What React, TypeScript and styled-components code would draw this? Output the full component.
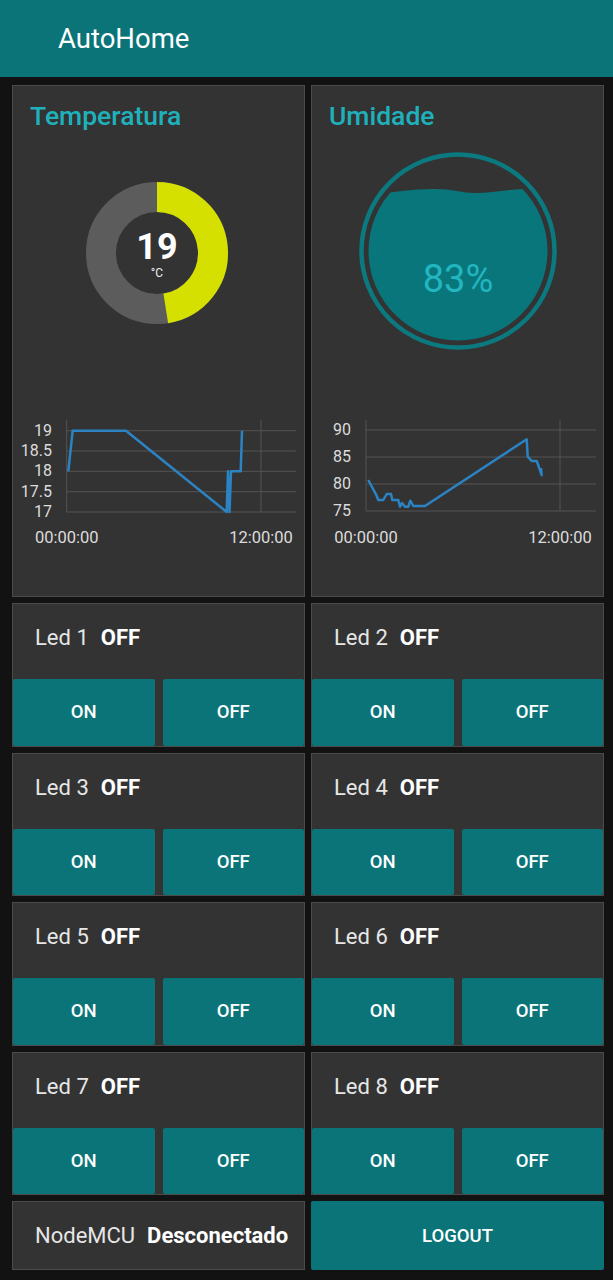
import React from "react";
import styled, { createGlobalStyle } from "styled-components";

const TEAL = "#0a7479";

const GlobalStyle = createGlobalStyle`
  html, body { margin: 0; padding: 0; background: #121212; }
  body { font-family: Roboto, "Noto Sans", Arial, sans-serif; }
  * { box-sizing: border-box; }
`;

const Page = styled.div`
  min-height: 1280px;
  background: #121212;
`;

const Header = styled.header`
  height: 77px;
  background: ${TEAL};
  display: flex;
  align-items: center;
  padding-left: 58px;
  color: #ffffff;
  font-size: 27.5px;
  font-weight: 400;
`;

const Grid = styled.main`
  display: grid;
  grid-template-columns: 293px 293px;
  gap: 6px;
  padding: 8px 9px 0 12px;
`;

const Card = styled.section`
  height: 512px;
  background: #333333;
  border: 1px solid #4b4b4b;
  display: flex;
  flex-direction: column;
  overflow: hidden;
`;

const CardTitle = styled.h2`
  margin: 0;
  padding: 15px 17px 0;
  font-size: 26.5px;
  line-height: 30px;
  font-weight: 500;
  color: #1fb1bb;
`;

const GaugeArea = styled.div<{ $shift?: number }>`
  height: 244px;
  display: flex;
  align-items: center;
  justify-content: center;
  padding-right: ${(p) => p.$shift ?? 0}px;
`;

const ChartSvg = styled.svg`
  display: block;
  margin-top: 35px;
  font-family: Roboto, Arial, sans-serif;
`;

const LedCard = styled.section`
  height: 143.5px;
  background: #333333;
  border: 1px solid #4b4b4b;
  display: flex;
  flex-direction: column;
`;

const LedTitle = styled.div`
  height: 75px;
  padding: 21px 22px 0;
  font-size: 22px;
  line-height: 25px;
  color: #e6e6e6;
  display: flex;
  gap: 12px;
`;

const State = styled.b`
  font-weight: 700;
  color: #ffffff;
`;

const ButtonRow = styled.div`
  flex: 1;
  display: grid;
  grid-template-columns: 1fr 1fr;
  gap: 8px;
`;

const ActionButton = styled.button<{ $tall?: boolean }>`
  background: ${TEAL};
  border: 0;
  border-radius: 2px;
  color: #ffffff;
  font-family: inherit;
  font-size: 18.5px;
  font-weight: 500;
  text-transform: uppercase;
  padding: 0;
  height: ${(p) => (p.$tall ? "69px" : "auto")};
`;

const StatusCard = styled.section`
  height: 69px;
  background: #333333;
  border: 1px solid #4b4b4b;
  display: flex;
  align-items: center;
  gap: 12px;
  padding-left: 22px;
  font-size: 22px;
  color: #e6e6e6;
`;

const LINE = "#2b83c4";
const GRID = "#545454";
const LABEL = "#dcdcdc";

function Donut() {
  const c = 75;
  const r = 56;
  const a = (171 * Math.PI) / 180;
  const ex = c + r * Math.sin(a);
  const ey = c - r * Math.cos(a);
  return (
    <svg width="150" height="150" viewBox="0 0 150 150">
      <circle cx={c} cy={c} r={r} fill="none" stroke="#5c5c5c" strokeWidth="30" />
      <path
        d={`M ${c} ${c - r} A ${r} ${r} 0 0 1 ${ex} ${ey}`}
        fill="none"
        stroke="#d5df00"
        strokeWidth="30"
      />
      <text x={c} y="81" textAnchor="middle" fontSize="36" fontWeight="700" fill="#ffffff" fontFamily="Roboto, Arial, sans-serif">
        19
      </text>
      <text x={c} y="98.5" textAnchor="middle" fontSize="12" fill="#eeeeee" fontFamily="Roboto, Arial, sans-serif">
        °C
      </text>
    </svg>
  );
}

function WaterGauge() {
  return (
    <svg width="200" height="204" viewBox="0 0 200 204">
      <defs>
        <clipPath id="waterClip">
          <circle cx="100" cy="100" r="89.5" />
        </clipPath>
      </defs>
      <circle cx="100" cy="100" r="96.5" fill="none" stroke="#0b7a80" strokeWidth="4.5" />
      <path
        clipPath="url(#waterClip)"
        d="M 0 45 C 30 42, 55 37.5, 78 38 C 98 38.5, 104 42, 118 42 C 134 42, 150 38, 172 38 L 200 38 L 200 200 L 0 200 Z"
        fill="#08767b"
      />
      <text x="100" y="140.5" textAnchor="middle" fontSize="38" fill="#21b6c0" fontFamily="Roboto, Arial, sans-serif">
        83%
      </text>
    </svg>
  );
}

type ChartProps = {
  yTicks: { label: string; y: number }[];
  points: [number, number][];
  xLines: [number, number];
  gridRight: number;
  gridTop: number;
};

function LineChart({ yTicks, points, xLines, gridRight, gridTop }: ChartProps) {
  const bottom = yTicks[yTicks.length - 1].y;
  return (
    <ChartSvg width="291" height="145" viewBox="0 0 291 145">
      {yTicks.map((t) => (
        <line key={t.label} x1={xLines[0]} x2={gridRight} y1={t.y} y2={t.y} stroke={GRID} strokeWidth="1" />
      ))}
      {xLines.map((x) => (
        <line key={x} x1={x} x2={x} y1={gridTop} y2={bottom} stroke={GRID} strokeWidth="1" />
      ))}
      {yTicks.map((t) => (
        <text key={t.label + "t"} x="39" y={t.y + 5} textAnchor="end" fontSize="16" fill={LABEL}>
          {t.label}
        </text>
      ))}
      <text x={xLines[0]} y="133.3" textAnchor="middle" fontSize="16.5" fill={LABEL}>
        00:00:00
      </text>
      <text x={xLines[1]} y="133.3" textAnchor="middle" fontSize="16.5" fill={LABEL}>
        12:00:00
      </text>
      <polyline
        points={points.map((p) => p.join(",")).join(" ")}
        fill="none"
        stroke={LINE}
        strokeWidth="2.5"
        strokeLinejoin="round"
      />
    </ChartSvg>
  );
}

const tempPoints: [number, number][] = [
  [55.3, 61.3],
  [59.7, 20.7],
  [113, 20.7],
  [213.7, 102],
  [215, 61.3],
  [216.5, 102],
  [218, 61.3],
  [227.7, 61.3],
  [229, 20.7],
];

const humPoints: [number, number][] = [
  [56.3, 70],
  [60, 77],
  [64, 84.3],
  [66.3, 90],
  [71.3, 90],
  [74.7, 84],
  [79, 84],
  [80.3, 90],
  [86.3, 90],
  [88, 96.7],
  [90, 93],
  [93, 96.7],
  [96.3, 96.7],
  [98.3, 90.7],
  [101.3, 96],
  [113, 96],
  [214.7, 29.3],
  [215.7, 46.7],
  [219.7, 51],
  [224.7, 51],
  [228, 60],
  [229.7, 65],
  [229, 58],
];

const leds = [1, 2, 3, 4, 5, 6, 7, 8];

export default function App() {
  return (
    <Page>
      <GlobalStyle />
      <Header>AutoHome</Header>
      <Grid>
        <Card>
          <CardTitle>Temperatura</CardTitle>
          <GaugeArea $shift={4}>
            <Donut />
          </GaugeArea>
          <LineChart
            yTicks={[
              { label: "19", y: 20.7 },
              { label: "18.5", y: 41 },
              { label: "18", y: 61.3 },
              { label: "17.5", y: 81.7 },
              { label: "17", y: 102 },
            ]}
            points={tempPoints}
            xLines={[53.7, 248]}
            gridRight={282.7}
            gridTop={10}
          />
        </Card>
        <Card>
          <CardTitle>Umidade</CardTitle>
          <GaugeArea>
            <WaterGauge />
          </GaugeArea>
          <LineChart
            yTicks={[
              { label: "90", y: 20 },
              { label: "85", y: 47 },
              { label: "80", y: 74 },
              { label: "75", y: 101 },
            ]}
            points={humPoints}
            xLines={[54, 248]}
            gridRight={284}
            gridTop={10}
          />
        </Card>
        {leds.map((n) => (
          <LedCard key={n}>
            <LedTitle>
              <span>Led {n}</span>
              <State>OFF</State>
            </LedTitle>
            <ButtonRow>
              <ActionButton>On</ActionButton>
              <ActionButton>Off</ActionButton>
            </ButtonRow>
          </LedCard>
        ))}
        <StatusCard>
          <span>NodeMCU</span>
          <State>Desconectado</State>
        </StatusCard>
        <ActionButton $tall>Logout</ActionButton>
      </Grid>
    </Page>
  );
}
